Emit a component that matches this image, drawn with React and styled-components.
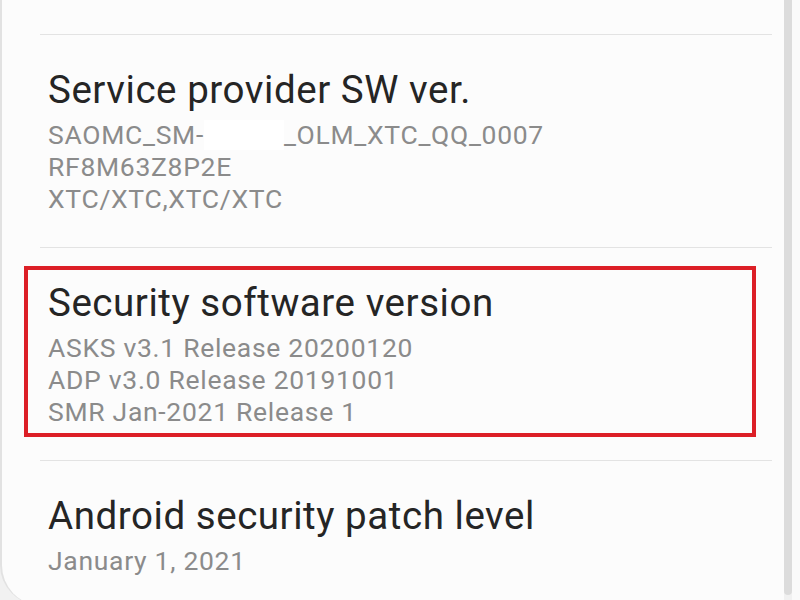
import React from "react";
import styled, { createGlobalStyle } from "styled-components";

const Global = createGlobalStyle`
  html, body { margin: 0; padding: 0; overflow: hidden; }
  body { font-family: Roboto, "Liberation Sans", sans-serif; background: #f1f1f1; }
`;

const Screen = styled.div`
  display: flex;
  align-items: flex-start;
  width: 800px;
  height: 600px;
  overflow: hidden;
  background: #f1f1f1;
`;

const Card = styled.div`
  flex: 0 0 784px;
  box-sizing: border-box;
  height: 605px;
  padding-top: 34px;
  background: #fcfcfc;
  border-left: 2px solid #e2e2e2;
  border-bottom-left-radius: 40px;
`;

const Rail = styled.div`
  flex: 0 0 8px;
  height: 595px;
  background: #dcdcdc;
  border-radius: 0 0 4px 4px;
`;

const Filler = styled.div`
  flex: 1;
  height: 600px;
  background: #fafafa;
`;

const Divider = styled.div`
  height: 1px;
  margin: 0 12px 0 38px;
  background: #e3e3e3;
`;

const Item = styled.section`
  position: relative;
  padding: 32px 20px 32px 46px;
`;

const Highlight = styled.div`
  position: absolute;
  left: 22px;
  top: 18px;
  width: 732px;
  height: 171px;
  box-sizing: border-box;
  border: 4px solid #dc1f26;
  pointer-events: none;
`;

const Title = styled.div`
  font-size: 38.5px;
  line-height: 46px;
  letter-spacing: 0.55px;
  color: #252525;
  white-space: nowrap;
`;

const Sub = styled.div`
  margin-top: 6px;
  font-size: 26.5px;
  line-height: 32px;
  letter-spacing: 0.7px;
  color: #8b8b8b;
  white-space: nowrap;
`;

const Redact = styled.span`
  display: inline-block;
  width: 80px;
  height: 30px;
  vertical-align: -6px;
  background: #ffffff;
`;

export default function App() {
  return (
    <>
      <Global />
      <Screen>
        <Card>
          <Divider />
          <Item>
            <Title>Service provider SW ver.</Title>
            <Sub>
              SAOMC_SM-<Redact />_OLM_XTC_QQ_0007
              <br />
              RF8M63Z8P2E
              <br />
              XTC/XTC,XTC/XTC
            </Sub>
          </Item>
          <Divider />
          <Item>
            <Highlight />
            <Title>Security software version</Title>
            <Sub>
              ASKS v3.1 Release 20200120
              <br />
              ADP v3.0 Release 20191001
              <br />
              SMR Jan-2021 Release 1
            </Sub>
          </Item>
          <Divider />
          <Item>
            <Title>Android security patch level</Title>
            <Sub>January 1, 2021</Sub>
          </Item>
        </Card>
        <Rail />
        <Filler />
      </Screen>
    </>
  );
}
